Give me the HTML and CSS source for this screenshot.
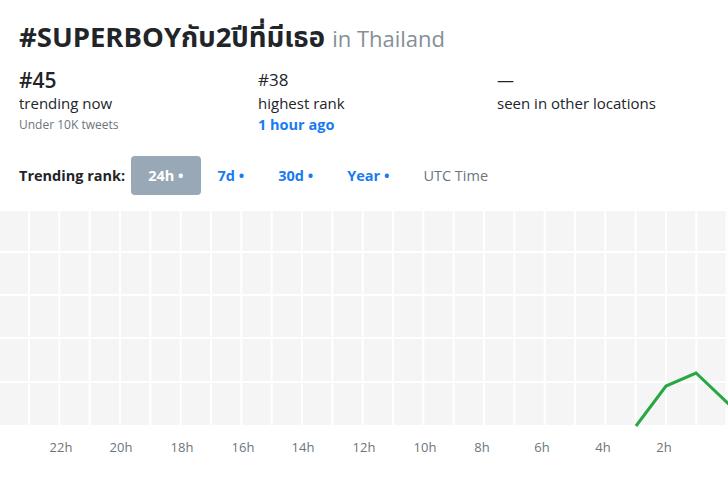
FILE: index.html
```html
<!DOCTYPE html>
<html>
<head>
<meta charset="utf-8">
<link rel="stylesheet" href="styles.css">
</head>
<body>
<div class="page">
  <h1 class="title">#SUPERBOYกับ2ปีที่มีเธอ <span class="where">in Thailand</span></h1>
  <div class="stats">
    <div class="stat">
      <div class="big">#45</div>
      <div class="label">trending now</div>
      <div class="sub">Under 10K tweets</div>
    </div>
    <div class="stat">
      <div class="mid">#38</div>
      <div class="label">highest rank</div>
      <div class="link">1 hour ago</div>
    </div>
    <div class="stat">
      <div class="mid">—</div>
      <div class="label">seen in other locations</div>
    </div>
  </div>
  <div class="ranks">
    <span class="rank-title">Trending rank:</span>
    <span class="pill active">24h •</span>
    <span class="pill">7d •</span>
    <span class="pill">30d •</span>
    <span class="pill">Year •</span>
    <span class="pill utc">UTC Time</span>
  </div>
</div>
<svg class="chart" width="728" height="250" viewBox="0 0 728 250">
  <rect x="0" y="0" width="728" height="214" fill="#f5f5f5"/>
  <g fill="#ffffff">
    <rect x="0" y="40" width="728" height="2"/>
    <rect x="0" y="83" width="728" height="2"/>
    <rect x="0" y="126" width="728" height="2"/>
    <rect x="0" y="170" width="728" height="2"/>
    <rect x="28" y="0" width="2" height="214"/>
    <rect x="58.3" y="0" width="2" height="214"/>
    <rect x="88.7" y="0" width="2" height="214"/>
    <rect x="119" y="0" width="2" height="214"/>
    <rect x="149.3" y="0" width="2" height="214"/>
    <rect x="179.7" y="0" width="2" height="214"/>
    <rect x="210" y="0" width="2" height="214"/>
    <rect x="240.3" y="0" width="2" height="214"/>
    <rect x="270.7" y="0" width="2" height="214"/>
    <rect x="301" y="0" width="2" height="214"/>
    <rect x="331.3" y="0" width="2" height="214"/>
    <rect x="361.7" y="0" width="2" height="214"/>
    <rect x="392" y="0" width="2" height="214"/>
    <rect x="422.3" y="0" width="2" height="214"/>
    <rect x="452.7" y="0" width="2" height="214"/>
    <rect x="483" y="0" width="2" height="214"/>
    <rect x="513.3" y="0" width="2" height="214"/>
    <rect x="543.7" y="0" width="2" height="214"/>
    <rect x="574" y="0" width="2" height="214"/>
    <rect x="604.3" y="0" width="2" height="214"/>
    <rect x="634.7" y="0" width="2" height="214"/>
    <rect x="665" y="0" width="2" height="214"/>
    <rect x="695.3" y="0" width="2" height="214"/>
    <rect x="725.7" y="0" width="2" height="214"/>
  </g>
  <polyline points="636,215 666,175 696,162 734,198" fill="none" stroke="#28a745" stroke-width="3"/>
  <g class="axis" text-anchor="middle">
    <text x="61" y="241">22h</text>
    <text x="121" y="241">20h</text>
    <text x="182" y="241">18h</text>
    <text x="243" y="241">16h</text>
    <text x="303" y="241">14h</text>
    <text x="364" y="241">12h</text>
    <text x="425" y="241">10h</text>
    <text x="482" y="241">8h</text>
    <text x="542" y="241">6h</text>
    <text x="603" y="241">4h</text>
    <text x="664" y="241">2h</text>
  </g>
</svg>
</body>
</html>
```

FILE: styles.css
```css
html, body {
  margin: 0;
  padding: 0;
  background: #ffffff;
  font-family: "Open Sans", "Noto Sans", "Noto Sans Thai", sans-serif;
  color: #212529;
  overflow: hidden;
}
.page {
  padding: 16px 19px 0 19px;
}
.title {
  margin: 0;
  font-size: 27.5px;
  font-weight: 700;
  line-height: 42px;
}
.where {
  font-weight: 400;
  color: #868e96;
  font-size: 22px;
}
.stats {
  display: grid;
  grid-template-columns: 239px 239px 239px;
  margin-top: 8px;
}
.big {
  font-size: 21px;
  font-weight: 600;
  line-height: 26px;
}
.mid {
  font-size: 17px;
  line-height: 26px;
}
.label {
  font-size: 15px;
  line-height: 21px;
}
.sub {
  font-size: 12px;
  line-height: 21px;
  color: #6c757d;
}
.link {
  font-size: 14.5px;
  line-height: 21px;
  font-weight: 700;
  color: #1a7bf0;
}
.ranks {
  display: flex;
  align-items: center;
  margin-top: 21px;
  height: 39px;
}
.rank-title {
  font-size: 14.5px;
  font-weight: 700;
  margin-right: 6px;
}
.pill {
  font-size: 14.5px;
  font-weight: 700;
  color: #1a7bf0;
  padding: 0 17px;
  line-height: 39px;
  border-radius: 4px;
}
.pill.active {
  background: #99a8b7;
  color: #ffffff;
}
.pill.utc {
  font-weight: 400;
  color: #6c757d;
}
.chart {
  display: block;
  margin-top: 16px;
}
.axis text {
  font-family: "Open Sans", "Noto Sans", sans-serif;
  font-size: 13px;
  fill: #6c757d;
}
```
